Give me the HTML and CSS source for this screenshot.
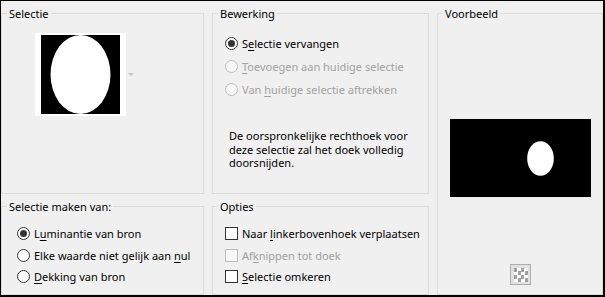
FILE: index.html
```html
<!DOCTYPE html>
<html lang="nl">
<head>
    <meta charset="UTF-8">
    <link rel="stylesheet" href="styles.css">
    <title>Selectie uit masker</title>
</head>
<body>
    <div class="dialog">
        <fieldset class="group group-sel">
            <legend>Selectie</legend>
            <div class="thumb-row">
                <div class="thumb">
                    <svg width="79" height="79" viewBox="0 0 79 79">
                        <rect width="79" height="79" fill="#000"/>
                        <ellipse cx="39.5" cy="39.5" rx="30" ry="39.5" fill="#fff"/>
                    </svg>
                </div>
                <span class="drop-arrow"></span>
            </div>
        </fieldset>

        <fieldset class="group group-edit">
            <legend>Bewerking</legend>
            <div class="rows rows-edit">
                <label class="row"><span class="radio on"></span><span>S<u>e</u>lectie vervangen</span></label>
                <label class="row off"><span class="radio"></span><span><u>T</u>oevoegen aan huidige selectie</span></label>
                <label class="row off"><span class="radio"></span><span>Van <u>h</u>uidige selectie aftrekken</span></label>
            </div>
            <p class="note">De oorspronkelijke rechthoek voor<br>deze selectie zal het doek volledig<br>doorsnijden.</p>
        </fieldset>

        <fieldset class="group group-preview">
            <legend>Voorbeeld</legend>
            <div class="preview">
                <svg width="141" height="78" viewBox="0 0 141 78">
                    <rect width="141" height="78" fill="#000"/>
                    <ellipse cx="90.5" cy="39.5" rx="13.3" ry="17.2" fill="#fff"/>
                </svg>
            </div>
            <div class="alpha-btn"><span class="checker"></span></div>
        </fieldset>

        <fieldset class="group group-source">
            <legend>Selectie maken van:</legend>
            <div class="rows rows-small">
                <label class="row"><span class="radio on"></span><span>L<u>u</u>minantie van bron</span></label>
                <label class="row"><span class="radio"></span><span>Elke waarde niet gelijk aan <u>n</u>ul</span></label>
                <label class="row"><span class="radio"></span><span><u>D</u>ekking van bron</span></label>
            </div>
        </fieldset>

        <fieldset class="group group-opts">
            <legend>Opties</legend>
            <div class="rows rows-small">
                <label class="row"><span class="check"></span><span>Naar <u>l</u>inkerbovenhoek verplaatsen</span></label>
                <label class="row off"><span class="check"></span><span>Af<u>k</u>nippen tot doek</span></label>
                <label class="row"><span class="check"></span><span><u>S</u>electie omkeren</span></label>
            </div>
        </fieldset>
    </div>
</body>
</html>
```

FILE: styles.css
```css
:root {
    --font: 'Noto Sans', 'Open Sans', sans-serif;
    --face: #f0f0f0;
    --frame: #dcdcdc;
    --text: #000;
    --gray-text: #a0a0a0;
    --control: #333;
    --control-off: #bcbcbc;
}

body {
    margin: 0;
    font-family: var(--font);
    font-size: 11px;
    color: var(--text);
    background: var(--face);
}

.dialog {
    width: 605px;
    height: 297px;
    box-sizing: border-box;
    border-style: solid;
    border-color: #000;
    border-width: 1px 2px 2px 1px;
    padding: 5px 0 0 0;
    background: var(--face);
    display: grid;
    grid-template-columns: 203px 217px 166px;
    grid-template-rows: 188px 96px;
    column-gap: 8px;
    row-gap: 5px;
}

.group {
    margin: 0;
    padding: 0;
    min-width: 0;
    border: 1px solid var(--frame);
}

.group legend {
    margin-left: 5px;
    padding: 0 2px;
    line-height: 15px;
}

.group-sel { grid-column: 1; grid-row: 1; }
.group-edit { grid-column: 2; grid-row: 1; }
.group-preview { grid-column: 3; grid-row: 1 / span 2; }
.group-source { grid-column: 1; grid-row: 2; }
.group-opts { grid-column: 2; grid-row: 2; }

/* selectie thumbnail */
.thumb-row {
    display: flex;
    align-items: center;
    gap: 2px;
    margin: 12px 0 0 33px;
}

.thumb {
    background: #fff;
    padding: 2px 6px;
    line-height: 0;
}

.drop-arrow {
    width: 0;
    height: 0;
    border-left: 3px solid transparent;
    border-right: 3px solid transparent;
    border-top: 3px solid #c4c4c4;
}

/* radio / checkbox rows */
.rows {
    display: flex;
    flex-direction: column;
}

.rows-edit {
    margin: 11px 0 0 12px;
}

.rows-edit .row {
    height: 23px;
}

.rows-small {
    margin-top: 9px;
}

.group-source .rows-small {
    margin-left: 15px;
}

.group-opts .rows-small {
    margin-left: 12px;
}

.rows-small .row {
    height: 21.5px;
}

.row {
    display: flex;
    align-items: center;
    gap: 4px;
    white-space: nowrap;
}

.row.off {
    color: var(--gray-text);
}

.row u {
    text-decoration-thickness: 1px;
    text-underline-offset: 2px;
}

.radio,
.check {
    flex: none;
    width: 13px;
    height: 13px;
    box-sizing: border-box;
    border: 1px solid var(--control);
    background: #fff;
}

.radio {
    border-radius: 50%;
    display: grid;
    place-items: center;
}

.radio.on::after {
    content: "";
    width: 7px;
    height: 7px;
    border-radius: 50%;
    background: var(--control);
}

.row.off .radio,
.row.off .check {
    border-color: var(--control-off);
    background: #f7f7f7;
}

.note {
    margin: 28px 0 0 16px;
    line-height: 13.5px;
    white-space: nowrap;
}

/* voorbeeld */
.preview {
    margin: 98px 0 0 12px;
    line-height: 0;
}

.alpha-btn {
    width: 21px;
    height: 21px;
    box-sizing: border-box;
    margin: 67px 0 0 72px;
    border: 1px solid #adadad;
    background: #e1e1e1;
    display: grid;
    place-items: center;
}

.checker {
    width: 14px;
    height: 14px;
    background: conic-gradient(#fff 25%, #a0a0a0 0 50%, #fff 0 75%, #a0a0a0 0) 0 0 / 7px 7px;
}
```
